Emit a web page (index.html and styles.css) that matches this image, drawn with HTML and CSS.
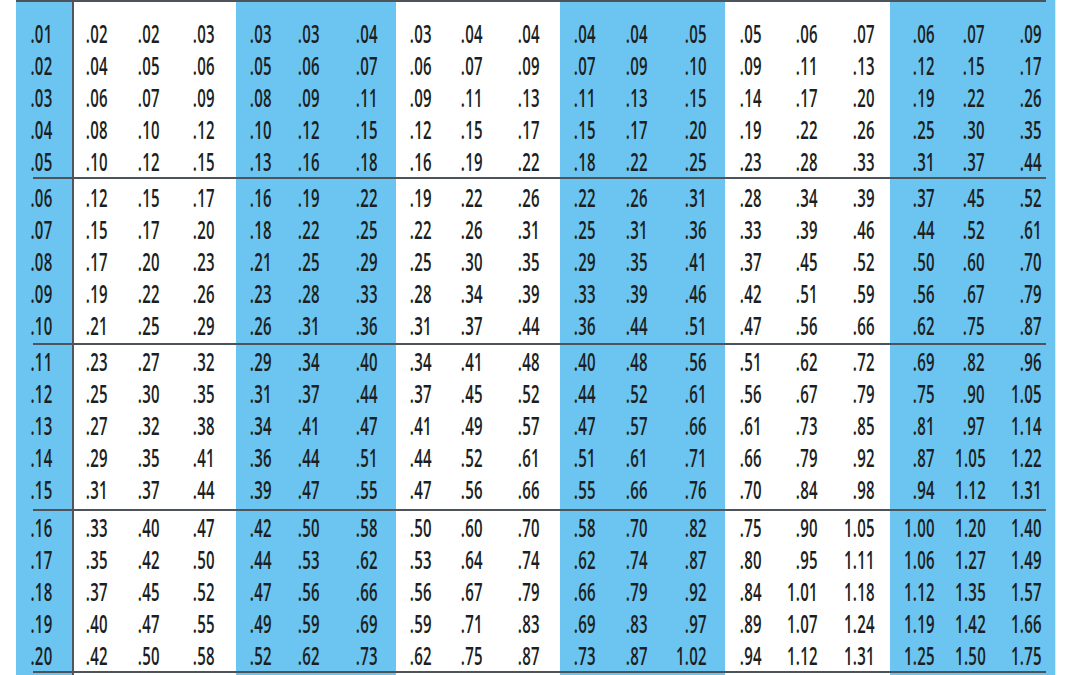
FILE: index.html
```html
<!DOCTYPE html>
<html>
<head>
<meta charset="utf-8">
<link rel="stylesheet" href="styles.css">
</head>
<body>
<div class="table">
  <div class="rule rule-top"></div>
  <div class="group g1">
    <div class="row"><span>.01</span><span>.02</span><span>.02</span><span>.03</span><span>.03</span><span>.03</span><span>.04</span><span>.03</span><span>.04</span><span>.04</span><span>.04</span><span>.04</span><span>.05</span><span>.05</span><span>.06</span><span>.07</span><span>.06</span><span>.07</span><span>.09</span></div>
    <div class="row"><span>.02</span><span>.04</span><span>.05</span><span>.06</span><span>.05</span><span>.06</span><span>.07</span><span>.06</span><span>.07</span><span>.09</span><span>.07</span><span>.09</span><span>.10</span><span>.09</span><span>.11</span><span>.13</span><span>.12</span><span>.15</span><span>.17</span></div>
    <div class="row"><span>.03</span><span>.06</span><span>.07</span><span>.09</span><span>.08</span><span>.09</span><span>.11</span><span>.09</span><span>.11</span><span>.13</span><span>.11</span><span>.13</span><span>.15</span><span>.14</span><span>.17</span><span>.20</span><span>.19</span><span>.22</span><span>.26</span></div>
    <div class="row"><span>.04</span><span>.08</span><span>.10</span><span>.12</span><span>.10</span><span>.12</span><span>.15</span><span>.12</span><span>.15</span><span>.17</span><span>.15</span><span>.17</span><span>.20</span><span>.19</span><span>.22</span><span>.26</span><span>.25</span><span>.30</span><span>.35</span></div>
    <div class="row"><span>.05</span><span>.10</span><span>.12</span><span>.15</span><span>.13</span><span>.16</span><span>.18</span><span>.16</span><span>.19</span><span>.22</span><span>.18</span><span>.22</span><span>.25</span><span>.23</span><span>.28</span><span>.33</span><span>.31</span><span>.37</span><span>.44</span></div>
  </div>
  <div class="rule"></div>
  <div class="group g2">
    <div class="row"><span>.06</span><span>.12</span><span>.15</span><span>.17</span><span>.16</span><span>.19</span><span>.22</span><span>.19</span><span>.22</span><span>.26</span><span>.22</span><span>.26</span><span>.31</span><span>.28</span><span>.34</span><span>.39</span><span>.37</span><span>.45</span><span>.52</span></div>
    <div class="row"><span>.07</span><span>.15</span><span>.17</span><span>.20</span><span>.18</span><span>.22</span><span>.25</span><span>.22</span><span>.26</span><span>.31</span><span>.25</span><span>.31</span><span>.36</span><span>.33</span><span>.39</span><span>.46</span><span>.44</span><span>.52</span><span>.61</span></div>
    <div class="row"><span>.08</span><span>.17</span><span>.20</span><span>.23</span><span>.21</span><span>.25</span><span>.29</span><span>.25</span><span>.30</span><span>.35</span><span>.29</span><span>.35</span><span>.41</span><span>.37</span><span>.45</span><span>.52</span><span>.50</span><span>.60</span><span>.70</span></div>
    <div class="row"><span>.09</span><span>.19</span><span>.22</span><span>.26</span><span>.23</span><span>.28</span><span>.33</span><span>.28</span><span>.34</span><span>.39</span><span>.33</span><span>.39</span><span>.46</span><span>.42</span><span>.51</span><span>.59</span><span>.56</span><span>.67</span><span>.79</span></div>
    <div class="row"><span>.10</span><span>.21</span><span>.25</span><span>.29</span><span>.26</span><span>.31</span><span>.36</span><span>.31</span><span>.37</span><span>.44</span><span>.36</span><span>.44</span><span>.51</span><span>.47</span><span>.56</span><span>.66</span><span>.62</span><span>.75</span><span>.87</span></div>
  </div>
  <div class="rule"></div>
  <div class="group g3">
    <div class="row"><span>.11</span><span>.23</span><span>.27</span><span>.32</span><span>.29</span><span>.34</span><span>.40</span><span>.34</span><span>.41</span><span>.48</span><span>.40</span><span>.48</span><span>.56</span><span>.51</span><span>.62</span><span>.72</span><span>.69</span><span>.82</span><span>.96</span></div>
    <div class="row"><span>.12</span><span>.25</span><span>.30</span><span>.35</span><span>.31</span><span>.37</span><span>.44</span><span>.37</span><span>.45</span><span>.52</span><span>.44</span><span>.52</span><span>.61</span><span>.56</span><span>.67</span><span>.79</span><span>.75</span><span>.90</span><span>1.05</span></div>
    <div class="row"><span>.13</span><span>.27</span><span>.32</span><span>.38</span><span>.34</span><span>.41</span><span>.47</span><span>.41</span><span>.49</span><span>.57</span><span>.47</span><span>.57</span><span>.66</span><span>.61</span><span>.73</span><span>.85</span><span>.81</span><span>.97</span><span>1.14</span></div>
    <div class="row"><span>.14</span><span>.29</span><span>.35</span><span>.41</span><span>.36</span><span>.44</span><span>.51</span><span>.44</span><span>.52</span><span>.61</span><span>.51</span><span>.61</span><span>.71</span><span>.66</span><span>.79</span><span>.92</span><span>.87</span><span>1.05</span><span>1.22</span></div>
    <div class="row"><span>.15</span><span>.31</span><span>.37</span><span>.44</span><span>.39</span><span>.47</span><span>.55</span><span>.47</span><span>.56</span><span>.66</span><span>.55</span><span>.66</span><span>.76</span><span>.70</span><span>.84</span><span>.98</span><span>.94</span><span>1.12</span><span>1.31</span></div>
  </div>
  <div class="rule"></div>
  <div class="group g4">
    <div class="row"><span>.16</span><span>.33</span><span>.40</span><span>.47</span><span>.42</span><span>.50</span><span>.58</span><span>.50</span><span>.60</span><span>.70</span><span>.58</span><span>.70</span><span>.82</span><span>.75</span><span>.90</span><span>1.05</span><span>1.00</span><span>1.20</span><span>1.40</span></div>
    <div class="row"><span>.17</span><span>.35</span><span>.42</span><span>.50</span><span>.44</span><span>.53</span><span>.62</span><span>.53</span><span>.64</span><span>.74</span><span>.62</span><span>.74</span><span>.87</span><span>.80</span><span>.95</span><span>1.11</span><span>1.06</span><span>1.27</span><span>1.49</span></div>
    <div class="row"><span>.18</span><span>.37</span><span>.45</span><span>.52</span><span>.47</span><span>.56</span><span>.66</span><span>.56</span><span>.67</span><span>.79</span><span>.66</span><span>.79</span><span>.92</span><span>.84</span><span>1.01</span><span>1.18</span><span>1.12</span><span>1.35</span><span>1.57</span></div>
    <div class="row"><span>.19</span><span>.40</span><span>.47</span><span>.55</span><span>.49</span><span>.59</span><span>.69</span><span>.59</span><span>.71</span><span>.83</span><span>.69</span><span>.83</span><span>.97</span><span>.89</span><span>1.07</span><span>1.24</span><span>1.19</span><span>1.42</span><span>1.66</span></div>
    <div class="row"><span>.20</span><span>.42</span><span>.50</span><span>.58</span><span>.52</span><span>.62</span><span>.73</span><span>.62</span><span>.75</span><span>.87</span><span>.73</span><span>.87</span><span>1.02</span><span>.94</span><span>1.12</span><span>1.31</span><span>1.25</span><span>1.50</span><span>1.75</span></div>
  </div>
  <div class="rule"></div>
</div>
</body>
</html>
```

FILE: styles.css
```css
html, body {
  margin: 0;
  padding: 0;
  background: #ffffff;
}

body {
  height: 675px;
  overflow: hidden;
  font-family: "Open Sans", "Noto Sans", "DejaVu Sans", sans-serif;
  color: #1b1f24;
}

.table {
  margin-left: 16px;
  width: 1039px;
  height: 675px;
  border-right: 1px solid #e2e6ea;
  background: linear-gradient(to right,
    #6cc5f0 0 56px,
    #50565c 56px 58px,
    #ffffff 58px 220px,
    #6cc5f0 220px 380px,
    #ffffff 380px 544px,
    #6cc5f0 544px 709px,
    #ffffff 709px 874px,
    #6cc5f0 874px 1039px);
}

.rule {
  margin-left: 17px;
  width: 1013px;
  height: 2px;
  background: #4d5359;
}

.rule-top {
  margin-left: 0;
  width: 1030px;
}

.group {
  display: flex;
  flex-direction: column;
}

.g1 { padding-top: 15px; }
.g2 { padding-top: 2px; padding-bottom: 2px; }
.g3 { padding-bottom: 4px; }
.g4 { padding-top: 0; }

.row {
  display: grid;
  grid-template-columns: 36px 56px 52px 55px 57px 48px 58px 54px 51px 57px 56px 52px 59px 55px 56px 57px 60px 50px 57px;
  height: 32px;
}

.row span {
  display: block;
  text-align: right;
  font-size: 25px;
  font-weight: 600;
  line-height: 32px;
  transform: scaleX(0.6);
  transform-origin: right center;
  letter-spacing: 0.5px;
}
```
